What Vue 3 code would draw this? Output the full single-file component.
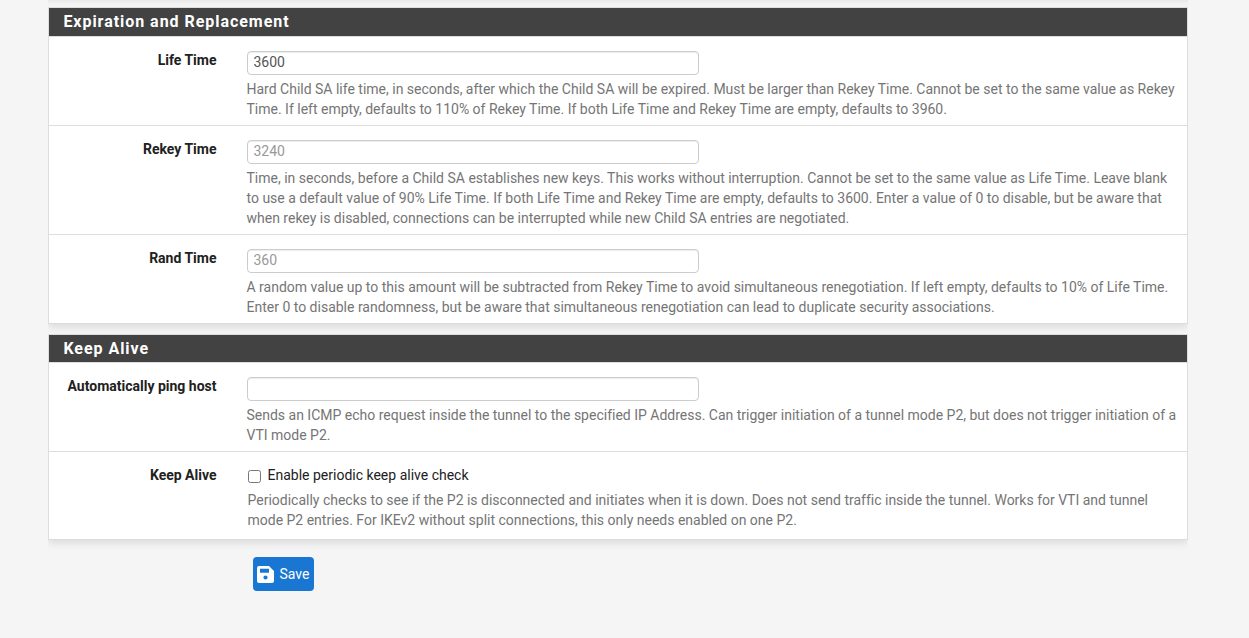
<script setup>
const sections = [
  {
    title: 'Expiration and Replacement',
    rows: [
      { label: 'Life Time', value: '3600', help: ['Hard Child SA life time, in seconds, after which the Child SA will be expired. Must be larger than Rekey Time. Cannot be set to the same value as Rekey', 'Time. If left empty, defaults to 110% of Rekey Time. If both Life Time and Rekey Time are empty, defaults to 3960.'] },
      { label: 'Rekey Time', placeholder: '3240', help: ['Time, in seconds, before a Child SA establishes new keys. This works without interruption. Cannot be set to the same value as Life Time. Leave blank', 'to use a default value of 90% Life Time. If both Life Time and Rekey Time are empty, defaults to 3600. Enter a value of 0 to disable, but be aware that', 'when rekey is disabled, connections can be interrupted while new Child SA entries are negotiated.'] },
      { label: 'Rand Time', placeholder: '360', help: ['A random value up to this amount will be subtracted from Rekey Time to avoid simultaneous renegotiation. If left empty, defaults to 10% of Life Time.', 'Enter 0 to disable randomness, but be aware that simultaneous renegotiation can lead to duplicate security associations.'] },
    ],
  },
  {
    title: 'Keep Alive',
    rows: [
      { label: 'Automatically ping host', help: ['Sends an ICMP echo request inside the tunnel to the specified IP Address. Can trigger initiation of a tunnel mode P2, but does not trigger initiation of a', 'VTI mode P2.'] },
      { label: 'Keep Alive', check: 'Enable periodic keep alive check', help: ['Periodically checks to see if the P2 is disconnected and initiates when it is down. Does not send traffic inside the tunnel. Works for VTI and tunnel', 'mode P2 entries. For IKEv2 without split connections, this only needs enabled on one P2.'] },
    ],
  },
]
</script>

<template>
  <div class="page">
    <div class="edge"></div>
    <section v-for="s in sections" :key="s.title" class="panel">
      <h2>{{ s.title }}</h2>
      <div v-for="r in s.rows" :key="r.label" class="row">
        <label class="name">{{ r.label }}</label>
        <div class="field">
          <label v-if="r.check" class="check"><input type="checkbox" /><span>{{ r.check }}</span></label>
          <input v-else class="text" type="text" :value="r.value" :placeholder="r.placeholder" />
          <div class="help" :class="{ inset: r.check }">
            <div v-for="l in r.help" :key="l">{{ l }}</div>
          </div>
        </div>
      </div>
    </section>
    <button class="save">
      <svg width="17" height="17" viewBox="0 0 17 17">
        <path fill="#fff" fill-rule="evenodd" d="M2 0H12L17 5V15Q17 17 15 17H2Q0 17 0 15V2Q0 0 2 0ZM3 2.7V6.7H12V2.7ZM8.5 9.4A2.1 2.1 0 1 0 8.5 13.6A2.1 2.1 0 1 0 8.5 9.4Z" />
      </svg>
      <span>Save</span>
    </button>
  </div>
</template>

<style>
body { background: #f5f5f5; }
</style>

<style scoped>
.page { box-sizing: border-box; height: 638px; padding: 0 48px; overflow: hidden; font: 14px/20px Roboto, sans-serif; color: #212121; }
.page * { box-sizing: border-box; }
.edge { width: 1140px; height: 7px; background: linear-gradient(#e8e8e8, #f2f2f2 4px, #f4f4f4); }
.panel { width: 1140px; margin-bottom: 10px; border: 1px solid #ddd; background: #fff; box-shadow: 0 3px 8px rgba(0, 0, 0, .11); clip-path: inset(0 0 -12px 0); }
h2 { height: 29px; margin: 0; padding-left: 14.4px; border-bottom: 1px solid #ddd; background: #424242; color: #fff; font-size: 16px; line-height: 27px; font-weight: 700; letter-spacing: .96px; }
.panel + .panel h2 { height: 28px; }
.row { display: flex; padding: 14px 0 6px; border-bottom: 1px solid #ddd; }
.row:last-child { border-bottom: 0; }
.panel + .panel .row:last-child { padding-bottom: 9px; }
.name { width: 167.5px; margin-right: 30px; text-align: right; font-weight: 700; line-height: 19px; }
.field { white-space: nowrap; }
.text { display: block; width: 452px; height: 24px; margin-left: .5px; padding: 0 5.5px 2px; border: 1px solid #ccc; border-radius: 4px; background: #fff; font: 14px Roboto, sans-serif; color: #555; box-shadow: inset 0 1px 1px rgba(0, 0, 0, .075); }
.text::placeholder { color: #999; }
.help { margin-top: 4px; color: #757575; letter-spacing: -.003px; }
.check { display: flex; align-items: flex-start; height: 20px; line-height: 19px; }
.check input { width: 13px; height: 13px; margin: 4px 7px 0 1px; }
.inset { padding-left: 1px; }
.save { display: flex; align-items: center; width: 61px; height: 34px; margin: 17px 0 0 205px; padding: 0 4px; border: 0; border-radius: 4px; background: #1976d2; color: #fff; font: 14px Roboto, sans-serif; gap: 5.5px; }
</style>
